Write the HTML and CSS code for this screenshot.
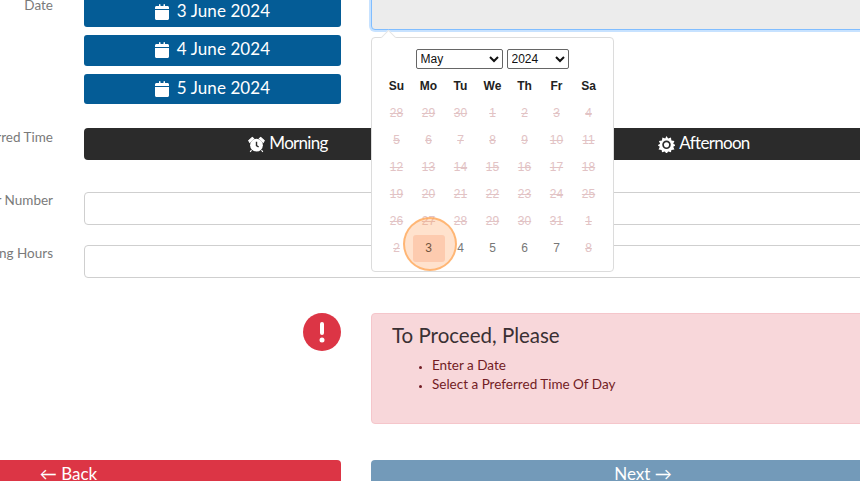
FILE: index.html
```html
<!DOCTYPE html>
<html lang="en">
<head>
<meta charset="utf-8">
<title>Booking</title>
<link rel="stylesheet" href="styles.css">
</head>
<body>
<svg class="defs" width="0" height="0">
  <symbol id="cal" viewBox="0 0 448 512"><path d="M152 0c13 0 24 11 24 24v40h96V24c0-13 11-24 24-24s24 11 24 24v40h80c26 0 48 22 48 48v48H0v-48c0-26 22-48 48-48h80V24c0-13 11-24 24-24zM0 192h448v272c0 26-22 48-48 48H48c-26 0-48-22-48-48z"/></symbol>
</svg>
<main class="page">
  <section class="row row-date">
    <div class="label">Date</div>
    <div class="date-stack">
      <button class="date-btn"><svg class="cal"><use href="#cal"/></svg>3 June 2024</button>
      <button class="date-btn"><svg class="cal"><use href="#cal"/></svg>4 June 2024</button>
      <button class="date-btn"><svg class="cal"><use href="#cal"/></svg>5 June 2024</button>
    </div>
    <div class="date-col">
      <div class="date-input"></div>
      <div class="picker">
        <span class="arrow"></span>
        <div class="picker-head">
          <select class="sel sel-month"><option>May</option></select>
          <select class="sel sel-year"><option>2024</option></select>
        </div>
        <div class="cal-grid">
          <b>Su</b><b>Mo</b><b>Tu</b><b>We</b><b>Th</b><b>Fr</b><b>Sa</b>
          <s>28</s><s>29</s><s>30</s><s>1</s><s>2</s><s>3</s><s>4</s>
          <s>5</s><s>6</s><s>7</s><s>8</s><s>9</s><s>10</s><s>11</s>
          <s>12</s><s>13</s><s>14</s><s>15</s><s>16</s><s>17</s><s>18</s>
          <s>19</s><s>20</s><s>21</s><s>22</s><s>23</s><s>24</s><s>25</s>
          <s>26</s><s>27</s><s>28</s><s>29</s><s>30</s><s>31</s><s>1</s>
          <s>2</s><span class="today">3</span><span>4</span><span>5</span><span>6</span><span>7</span><s>8</s>
        </div>
        <span class="click-mark"></span>
      </div>
    </div>
  </section>

  <section class="row row-time">
    <div class="label">Preferred Time</div>
    <div class="time-bar">
      <div class="time-opt">
        <svg class="time-ico" viewBox="0 0 24 24"><circle cx="12" cy="13" r="9"/><path class="cut" d="M12 8v5.5l3 2"/><path d="M1 6.5 6 2l2 1.5L2.5 9zM23 6.5 18 2l-2 1.5L21.500 9zM5 20l-2 2.500M19 20l2 2.500" class="ears"/></svg>
        Morning
      </div>
      <div class="time-opt">
        <svg class="time-ico" viewBox="0 0 24 24"><path d="M12 0l2.300 3.700 4-1.700.6 4.300 4.300.6-1.700 4 3.500 2.100-3.500 2.100 1.700 4-4.300.6-.6 3.300-4-1-2.300 3-2.300-3-4 1-.6-3.300-4.300-.6 1.700-4L-.5 13l3.500-2.100-1.700-4 4.300-.6.6-4.300 4 1.700z"/><circle class="cut-fill" cx="12" cy="12.500" r="6"/><circle cx="12" cy="12.500" r="3.600"/></svg>
        Afternoon
      </div>
    </div>
  </section>

  <section class="row row-number">
    <div class="label">Order Number</div>
    <div class="text-input"></div>
  </section>

  <section class="row row-hours">
    <div class="label">Working Hours</div>
    <div class="text-input"></div>
  </section>

  <section class="row row-alert">
    <div class="alert-icon-cell">
      <svg class="alert-icon" viewBox="0 0 38 38"><circle cx="19" cy="19" r="19"/><rect class="mark" x="17" y="9" width="4" height="13" rx="2"/><circle class="mark" cx="19" cy="27" r="2.500"/></svg>
    </div>
    <div class="alert">
      <h2>To Proceed, Please</h2>
      <ul>
        <li>Enter a Date</li>
        <li>Select a Preferred Time Of Day</li>
      </ul>
    </div>
  </section>

  <section class="row row-nav">
    <button class="nav-btn back">← Back</button>
    <button class="nav-btn next">Next →</button>
  </section>
</main>
</body>
</html>
```
FILE: styles.css
```css
html, body {
  margin: 0;
  height: 481px;
  overflow: hidden;
  background: #fff;
}
.defs { position: absolute; }
.page {
  width: 1119px;
  margin: -3.7px 0 0 -204px;
  font-family: Lato, "Open Sans", sans-serif;
}
.row {
  display: grid;
  grid-template-columns: 258px 257px 544px;
  column-gap: 30px;
}
.row-time { margin-top: 23.7px; }
.row-number { margin-top: 32px; }
.row-hours { margin-top: 20px; }
.row-alert { margin-top: 35px; }
.row-nav {
  margin-top: 36px;
  grid-template-columns: 545px 544px;
}
.label {
  padding-right: 1px;
  font-size: 13.5px;
  line-height: 20px;
  color: #7a7a7a;
  text-align: right;
  white-space: nowrap;
}
.row-date .label { margin-top: -1px; }
.row-time .label { margin-top: -1px; }
.row-number .label { margin-top: -2px; }
.row-hours .label { margin-top: -2px; }

.date-stack {
  display: flex;
  flex-direction: column;
  gap: 8px;
}
.date-btn {
  height: 30.7px;
  padding: 0 0 2px;
  border: 0;
  border-radius: 3px;
  background: #045c96;
  color: #fff;
  font: 17px/28px Lato, sans-serif;
  letter-spacing: .1px;
  display: flex;
  align-items: center;
  justify-content: center;
  gap: 8px;
}
.cal { width: 14px; height: 16px; fill: #fff; margin-top: 2px; }

.date-col { position: relative; }
.date-input {
  height: 32px;
  border: 1px solid #80bdff;
  border-radius: 4px;
  background: #ececec;
  box-shadow: 0 0 0 2px rgba(0, 123, 255, .22);
}
.picker {
  position: absolute;
  left: 0;
  top: 40.700px;
  z-index: 2;
  box-sizing: border-box;
  width: 243px;
  height: 235px;
  padding-top: 11px;
  background: #fff;
  border: 1px solid #dcdcdc;
  border-radius: 4px;
}
.arrow {
  position: absolute;
  left: 11px;
  top: -6px;
  width: 10px;
  height: 10px;
  background: #fff;
  border-left: 1px solid #e6e6e6;
  border-top: 1px solid #e6e6e6;
  transform: rotate(45deg);
}
.picker-head {
  display: flex;
  justify-content: center;
  gap: 4px;
  padding-right: 1px;
}
.sel {
  height: 20px;
  padding: 0;
  font: 12px "Liberation Sans", Arial, sans-serif;
  color: #111;
  background: #fff;
  border: 1px solid #666;
  border-radius: 2px;
}
.sel-month { width: 87px; }
.sel-year { width: 62px; }
.cal-grid {
  display: grid;
  grid-template-columns: repeat(7, 32px);
  grid-auto-rows: 27px;
  margin: 4px 0 0 8.500px;
  font: 12px/27px "Liberation Sans", Arial, sans-serif;
  text-align: center;
  color: #777;
}
.cal-grid b { color: #222; }
.cal-grid s { color: #e2c3c5; }
.today {
  background: #fcdfd5;
  color: #333;
  border-radius: 3px;
}
.click-mark {
  position: absolute;
  left: 30.500px;
  top: 179px;
  box-sizing: border-box;
  width: 54px;
  height: 54px;
  border-radius: 50%;
  border: 2px solid rgba(255, 160, 70, .65);
  background: rgba(255, 160, 90, .3);
}

.time-bar {
  grid-column: 2 / 4;
  height: 32px;
  display: grid;
  grid-template-columns: 416px 416px;
  background: #2b2b2b;
  border-radius: 4px;
}
.time-opt {
  display: flex;
  align-items: center;
  justify-content: center;
  gap: 4px;
  padding: 0 8px 5px 0;
  color: #fff;
  font-size: 17px;
  letter-spacing: -.7px;
  line-height: 30px;
}
.time-ico { width: 17px; height: 17px; fill: #fff; margin-top: 2px; }
.time-ico .cut { fill: none; stroke: #2b2b2b; stroke-width: 2; }
.time-ico .ears { stroke: #fff; stroke-width: 1.5; }
.time-ico .cut-fill { fill: #2b2b2b; }

.text-input {
  grid-column: 2 / 4;
  height: 33px;
  box-sizing: border-box;
  background: #fff;
  border: 1px solid #cfcfcf;
  border-radius: 4px;
}

.alert-icon-cell {
  grid-column: 1 / 3;
  display: flex;
  justify-content: flex-end;
}
.alert-icon { width: 38px; height: 38px; fill: #dc3545; }
.alert-icon .mark { fill: #fff; }
.alert {
  box-sizing: border-box;
  height: 111px;
  padding: 9px 20px;
  background: #f8d7da;
  border: 1px solid #f5c6cb;
  border-radius: 4px;
  color: #721c24;
}
.alert h2 {
  margin: 0;
  font-size: 20.500px;
  line-height: 24px;
  font-weight: 400;
  color: #3a3033;
}
.alert ul {
  margin: 9px 0 0;
  padding-left: 40px;
  font-size: 13.500px;
  line-height: 19px;
}
.alert li::marker { font-size: 10px; }

.nav-btn {
  height: 40px;
  padding: 0 0 13px;
  border: 0;
  border-radius: 4px;
  color: #fff;
  font: 17px/27px Lato, "DejaVu Sans", sans-serif;
}
.back { background: #dc3545; }
.next { background: #739ab9; }
```
